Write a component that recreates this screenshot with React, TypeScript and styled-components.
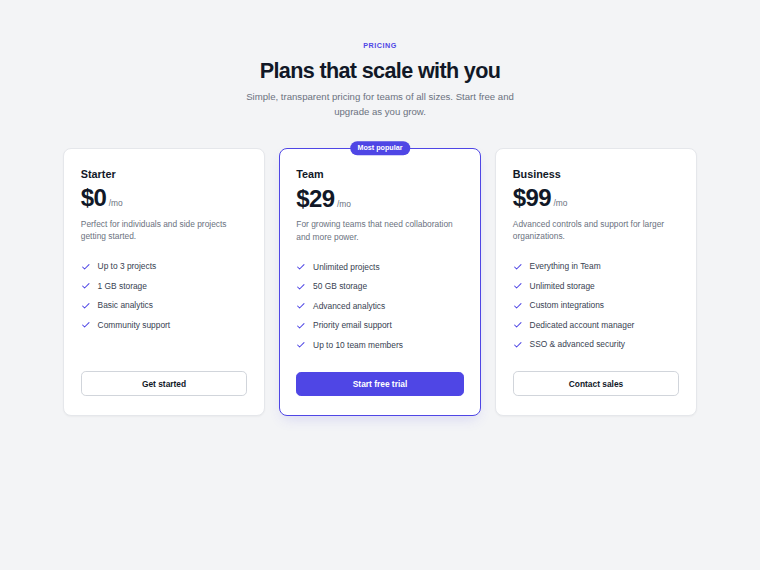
import React from 'react';
import styled, { createGlobalStyle } from 'styled-components';

type Plan = {
  name: string;
  price: string;
  description: string;
  features: string[];
  cta: string;
  featured?: boolean;
};

const plans: Plan[] = [
  {
    name: 'Starter',
    price: '$0',
    description: 'Perfect for individuals and side projects getting started.',
    features: ['Up to 3 projects', '1 GB storage', 'Basic analytics', 'Community support'],
    cta: 'Get started',
  },
  {
    name: 'Team',
    price: '$29',
    description: 'For growing teams that need collaboration and more power.',
    features: [
      'Unlimited projects',
      '50 GB storage',
      'Advanced analytics',
      'Priority email support',
      'Up to 10 team members',
    ],
    cta: 'Start free trial',
    featured: true,
  },
  {
    name: 'Business',
    price: '$99',
    description: 'Advanced controls and support for larger organizations.',
    features: [
      'Everything in Team',
      'Unlimited storage',
      'Custom integrations',
      'Dedicated account manager',
      'SSO & advanced security',
    ],
    cta: 'Contact sales',
  },
];

const CheckIcon = () => (
  <svg width="9.6" height="9.6" viewBox="0 0 24 24" fill="none" stroke="#4f46e5" strokeWidth="2.6" strokeLinecap="round" strokeLinejoin="round">
    <path d="M4 12.5l5 5L20 6.5" />
  </svg>
);

const App = () => {
  return (
    <>
      <GlobalStyle />
      <Page>
        <Header>
          <Eyebrow>Pricing</Eyebrow>
          <Title>Plans that scale with you</Title>
          <Subtitle>Simple, transparent pricing for teams of all sizes. Start free and upgrade as you grow.</Subtitle>
        </Header>
        <Grid>
          {plans.map((plan) => (
            <Card key={plan.name} featured={!!plan.featured}>
              {plan.featured && <Badge>Most popular</Badge>}
              <PlanName>{plan.name}</PlanName>
              <PriceRow>
                <Price>{plan.price}</Price>
                <Per>/mo</Per>
              </PriceRow>
              <Description>{plan.description}</Description>
              <Features>
                {plan.features.map((f) => (
                  <Feature key={f}>
                    <CheckIcon />
                    <span>{f}</span>
                  </Feature>
                ))}
              </Features>
              <Button featured={!!plan.featured}>{plan.cta}</Button>
            </Card>
          ))}
        </Grid>
      </Page>
    </>
  );
};

export default App;

const GlobalStyle = createGlobalStyle`
  * { box-sizing: border-box; }
  html, body {
    margin: 0;
    background: #f3f4f6;
    font-family: "Liberation Sans", Arial, sans-serif;
    -webkit-font-smoothing: antialiased;
  }
`;

const Page = styled.div`
  min-height: 570px;
  padding: 41px 63px;
`;

const Header = styled.div`
  display: flex;
  flex-direction: column;
  align-items: center;
  text-align: center;
`;

const Eyebrow = styled.div`
  font-size: 7.2px;
  line-height: 10px;
  font-weight: 700;
  letter-spacing: 0.07em;
  text-transform: uppercase;
  color: #4f46e5;
`;

const Title = styled.h1`
  margin: 7px 0 0;
  font-size: 21.6px;
  line-height: 26px;
  font-weight: 700;
  letter-spacing: -0.03em;
  color: #111827;
`;

const Subtitle = styled.p`
  margin: 4.5px 0 0;
  max-width: 280px;
  font-size: 9.6px;
  line-height: 15px;
  color: #6b7280;
`;

const Grid = styled.div`
  margin-top: 29px;
  display: grid;
  grid-template-columns: repeat(3, 1fr);
  gap: 14px;
`;

const Card = styled.div<{ featured: boolean }>`
  position: relative;
  display: flex;
  flex-direction: column;
  background: #fff;
  border-radius: 8px;
  border: ${({ featured }) => (featured ? '1.5px solid #4f46e5' : '1px solid #e5e7eb')};
  box-shadow: ${({ featured }) =>
    featured ? '0 6px 14px -4px rgba(79, 70, 229, 0.18)' : '0 1px 2px rgba(0, 0, 0, 0.04)'};
  padding: ${({ featured }) => (featured ? '18.8px 16.3px 18.5px' : '18.3px 16.8px 19px')};
`;

const Badge = styled.div`
  position: absolute;
  top: 0;
  left: 50%;
  transform: translate(-50%, -55%);
  background: #4f46e5;
  color: #fff;
  font-size: 7.2px;
  font-weight: 700;
  line-height: 14px;
  padding: 0 7.2px;
  border-radius: 999px;
  white-space: nowrap;
`;

const PlanName = styled.div`
  font-size: 10.8px;
  line-height: 15px;
  font-weight: 700;
  color: #111827;
`;

const PriceRow = styled.div`
  margin-top: 4.7px;
  display: flex;
  align-items: baseline;
  gap: 2.4px;
`;

const Price = styled.span`
  font-size: 24px;
  line-height: 24px;
  font-weight: 700;
  letter-spacing: -0.025em;
  color: #111827;
`;

const Per = styled.span`
  font-size: 8.4px;
  color: #6b7280;
`;

const Description = styled.p`
  margin: 7.4px 0 0;
  font-size: 8.4px;
  line-height: 12.6px;
  color: #6b7280;
`;

const Features = styled.ul`
  list-style: none;
  margin: 17.3px 0 20.5px;
  padding: 0;
  display: flex;
  flex-direction: column;
  gap: 6.9px;
`;

const Feature = styled.li`
  display: flex;
  align-items: center;
  gap: 7.2px;
  font-size: 8.4px;
  line-height: 12.6px;
  color: #374151;
`;

const Button = styled.button<{ featured: boolean }>`
  margin-top: auto;
  height: 24.5px;
  width: 100%;
  border-radius: 4.8px;
  font-family: inherit;
  font-size: 8.4px;
  font-weight: 700;
  cursor: pointer;
  border: 1px solid ${({ featured }) => (featured ? '#4f46e5' : '#d1d5db')};
  background: ${({ featured }) => (featured ? '#4f46e5' : '#fff')};
  color: ${({ featured }) => (featured ? '#fff' : '#111827')};
`;
